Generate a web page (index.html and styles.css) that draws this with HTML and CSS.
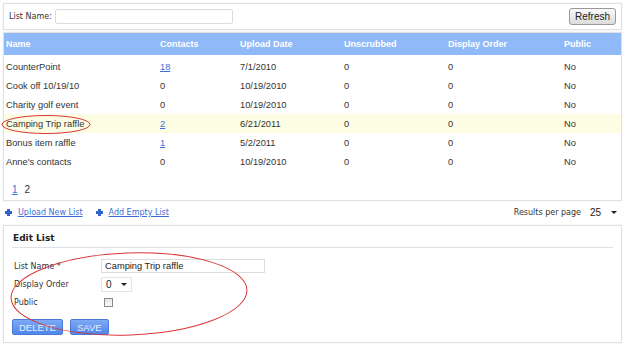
FILE: index.html
```html
<!DOCTYPE html>
<html lang="en">
<head>
  <meta charset="UTF-8" />
  <title>Contact Lists</title>
  <link rel="stylesheet" href="styles.css">
</head>
<body>
  <div class="page">

    <div class="panel search-bar">
      <label class="lbl">List Name: <input type="text" class="search-input"></label>
      <button class="btn-grey">Refresh</button>
    </div>

    <div class="panel grid-panel">
      <table class="grid">
        <thead>
          <tr>
            <th class="c-name">Name</th>
            <th class="c-contacts">Contacts</th>
            <th class="c-date">Upload Date</th>
            <th class="c-unscrub">Unscrubbed</th>
            <th class="c-order">Display Order</th>
            <th class="c-public">Public</th>
          </tr>
        </thead>
        <tbody>
          <tr class="spacer"><td colspan="6"></td></tr>
          <tr><td>CounterPoint</td><td><a href="#">18</a></td><td>7/1/2010</td><td>0</td><td>0</td><td>No</td></tr>
          <tr><td>Cook off 10/19/10</td><td>0</td><td>10/19/2010</td><td>0</td><td>0</td><td>No</td></tr>
          <tr><td>Charity golf event</td><td>0</td><td>10/19/2010</td><td>0</td><td>0</td><td>No</td></tr>
          <tr class="selected"><td>Camping Trip raffle</td><td><a href="#">2</a></td><td>6/21/2011</td><td>0</td><td>0</td><td>No</td></tr>
          <tr><td>Bonus item raffle</td><td><a href="#">1</a></td><td>5/2/2011</td><td>0</td><td>0</td><td>No</td></tr>
          <tr><td>Anne's contacts</td><td>0</td><td>10/19/2010</td><td>0</td><td>0</td><td>No</td></tr>
        </tbody>
      </table>
      <div class="pager"><a href="#">1</a><span>2</span></div>
    </div>

    <div class="actions">
      <div class="links">
        <a href="#" class="add-link"><span class="plus"></span>Upload New List</a>
        <a href="#" class="add-link"><span class="plus"></span>Add Empty List</a>
      </div>
      <div class="per-page">
        Results per page
        <div class="fake-select wide"><span>25</span><span class="caret"></span></div>
      </div>
    </div>

    <div class="panel edit-panel">
      <h2>Edit List</h2>
      <div class="form">
        <div class="form-row">
          <span class="lbl">List Name *</span>
          <input type="text" class="name-input" value="Camping Trip raffle">
        </div>
        <div class="form-row">
          <span class="lbl">Display Order</span>
          <div class="fake-select"><span>0</span><span class="caret"></span></div>
        </div>
        <div class="form-row">
          <span class="lbl">Public</span>
          <span class="check"></span>
        </div>
      </div>
      <div class="buttons">
        <button class="btn-blue">DELETE</button>
        <button class="btn-blue">SAVE</button>
      </div>
    </div>

    <!-- annotation marks -->
    <svg class="marks" width="625" height="352" viewBox="0 0 625 352">
      <ellipse cx="46" cy="124.5" rx="44" ry="9" fill="none" stroke="#d9363a" stroke-width="1"/>
      <ellipse cx="129" cy="294" rx="118" ry="41" transform="rotate(-2 129 294)" fill="none" stroke="#d9363a" stroke-width="1"/>
    </svg>
  </div>
</body>
</html>
```

FILE: styles.css
```css
body {
  margin: 0;
  background: #fff;
  font-family: Arial, "Liberation Sans", sans-serif;
  font-size: 9.3px;
  color: #333;
}

.page {
  position: relative;
  padding: 3px;
  inline-size: 619px;
}

.panel {
  border: 1px solid #e2e2e2;
  box-shadow: 0 0 1px #d4d4d4;
  background: #fff;
}

.lbl {
  font-family: "DejaVu Sans", Verdana, sans-serif;
  font-size: 8px;
  color: #333;
}

/* top search bar */
.search-bar {
  block-size: 25px;
  display: flex;
  align-items: center;
  justify-content: space-between;
  padding: 0 5px;
}

.search-input {
  inline-size: 176px;
  block-size: 13px;
  padding: 0;
  margin: 0 0 0 1px;
  border: 1px solid #dcdcdc;
  border-radius: 2px;
  vertical-align: middle;
}

.btn-grey {
  font-family: Arial, "Liberation Sans", sans-serif;
  font-size: 10px;
  color: #222;
  padding: 0 5px;
  block-size: 17px;
  border: 1px solid #999;
  border-radius: 3px;
  background: linear-gradient(#fafafa, #dcdcdc);
}

/* grid */
.grid-panel {
  margin-block-start: 2px;
  block-size: 167px;
  display: flex;
  flex-direction: column;
}

.grid {
  border-collapse: collapse;
  inline-size: 100%;
  table-layout: fixed;
}

.grid th {
  background: #8fb9f8;
  color: #fff;
  font-size: 9px;
  font-weight: bold;
  text-align: start;
  block-size: 22px;
  padding: 0 0 0 2px;
}

.grid td {
  block-size: 19px;
  padding: 0 0 0 2px;
}

.grid .spacer td {
  block-size: 2px;
}

.grid tr.selected td {
  background: #fdfde3;
}

.c-name { inline-size: 152px; }
.c-contacts { inline-size: 78px; }
.c-date { inline-size: 102px; }
.c-unscrub { inline-size: 102px; }
.c-order { inline-size: 114px; }

a {
  color: #3a6fd8;
}

.pager {
  display: flex;
  gap: 7px;
  padding: 13px 0 0 8px;
  font-size: 10px;
}

/* link row */
.actions {
  display: flex;
  justify-content: space-between;
  align-items: center;
  block-size: 19px;
  padding: 2px 0 0 2px;
}

.links {
  display: flex;
  gap: 13px;
}

.add-link {
  font-family: "DejaVu Sans", Verdana, sans-serif;
  font-size: 8px;
  color: #3a6fd8;
  display: flex;
  align-items: center;
  gap: 6px;
}

.plus {
  inline-size: 7px;
  block-size: 7px;
  background:
    linear-gradient(#2e63c9, #2e63c9) center / 7px 3px no-repeat,
    linear-gradient(#2e63c9, #2e63c9) center / 3px 7px no-repeat;
}

.per-page {
  display: flex;
  align-items: center;
  gap: 4px;
  font-family: "DejaVu Sans", Verdana, sans-serif;
  font-size: 8px;
  color: #333;
}

.fake-select {
  display: flex;
  align-items: center;
  justify-content: space-between;
  inline-size: 21px;
  block-size: 13px;
  padding: 0 4px;
  border: 1px solid #e4e4e4;
  background: #fff;
  font-family: Arial, "Liberation Sans", sans-serif;
  font-size: 10px;
  color: #222;
}

.fake-select.wide {
  inline-size: 27px;
  border-color: #fff;
}

.caret {
  inline-size: 0;
  block-size: 0;
  border-inline: 3px solid transparent;
  border-block-start: 3px solid #222;
}

/* edit panel */
.edit-panel {
  margin-block-start: 3px;
  block-size: 116px;
  padding: 0 8px;
}

.edit-panel h2 {
  margin: 0;
  padding: 7px 0 4px 1px;
  font-family: "DejaVu Sans", Verdana, sans-serif;
  font-size: 9px;
  font-weight: bold;
  color: #222;
  border-block-end: 1px solid #dde0e6;
}

.form {
  display: flex;
  flex-direction: column;
  gap: 4px;
  padding: 11px 0 0 2px;
}

.form-row {
  display: grid;
  grid-template-columns: 87px auto;
  align-items: center;
  block-size: 14px;
}

.name-input {
  inline-size: 156px;
  block-size: 12px;
  padding: 0 3px;
  margin: 0;
  border: 1px solid #dcdcdc;
  font-family: Arial, "Liberation Sans", sans-serif;
  font-size: 9.3px;
  color: #222;
}

.check {
  box-sizing: border-box;
  inline-size: 9px;
  block-size: 9px;
  margin-inline-start: 3px;
  border: 1px solid #8a8a8a;
  background: linear-gradient(#e6e6e6, #fafafa);
}

.buttons {
  display: flex;
  gap: 7px;
  padding: 10px 0 0 0;
}

.btn-blue {
  block-size: 16px;
  padding: 0 6px;
  border: 1px solid #4a7bd8;
  border-radius: 2px;
  background: linear-gradient(#7eaaf5, #4f86ea);
  color: #e4eeff;
  font-family: Arial, "Liberation Sans", sans-serif;
  font-size: 9.5px;
}

.marks {
  position: absolute;
  inset-block-start: 0;
  inset-inline-start: 0;
  pointer-events: none;
}
```
